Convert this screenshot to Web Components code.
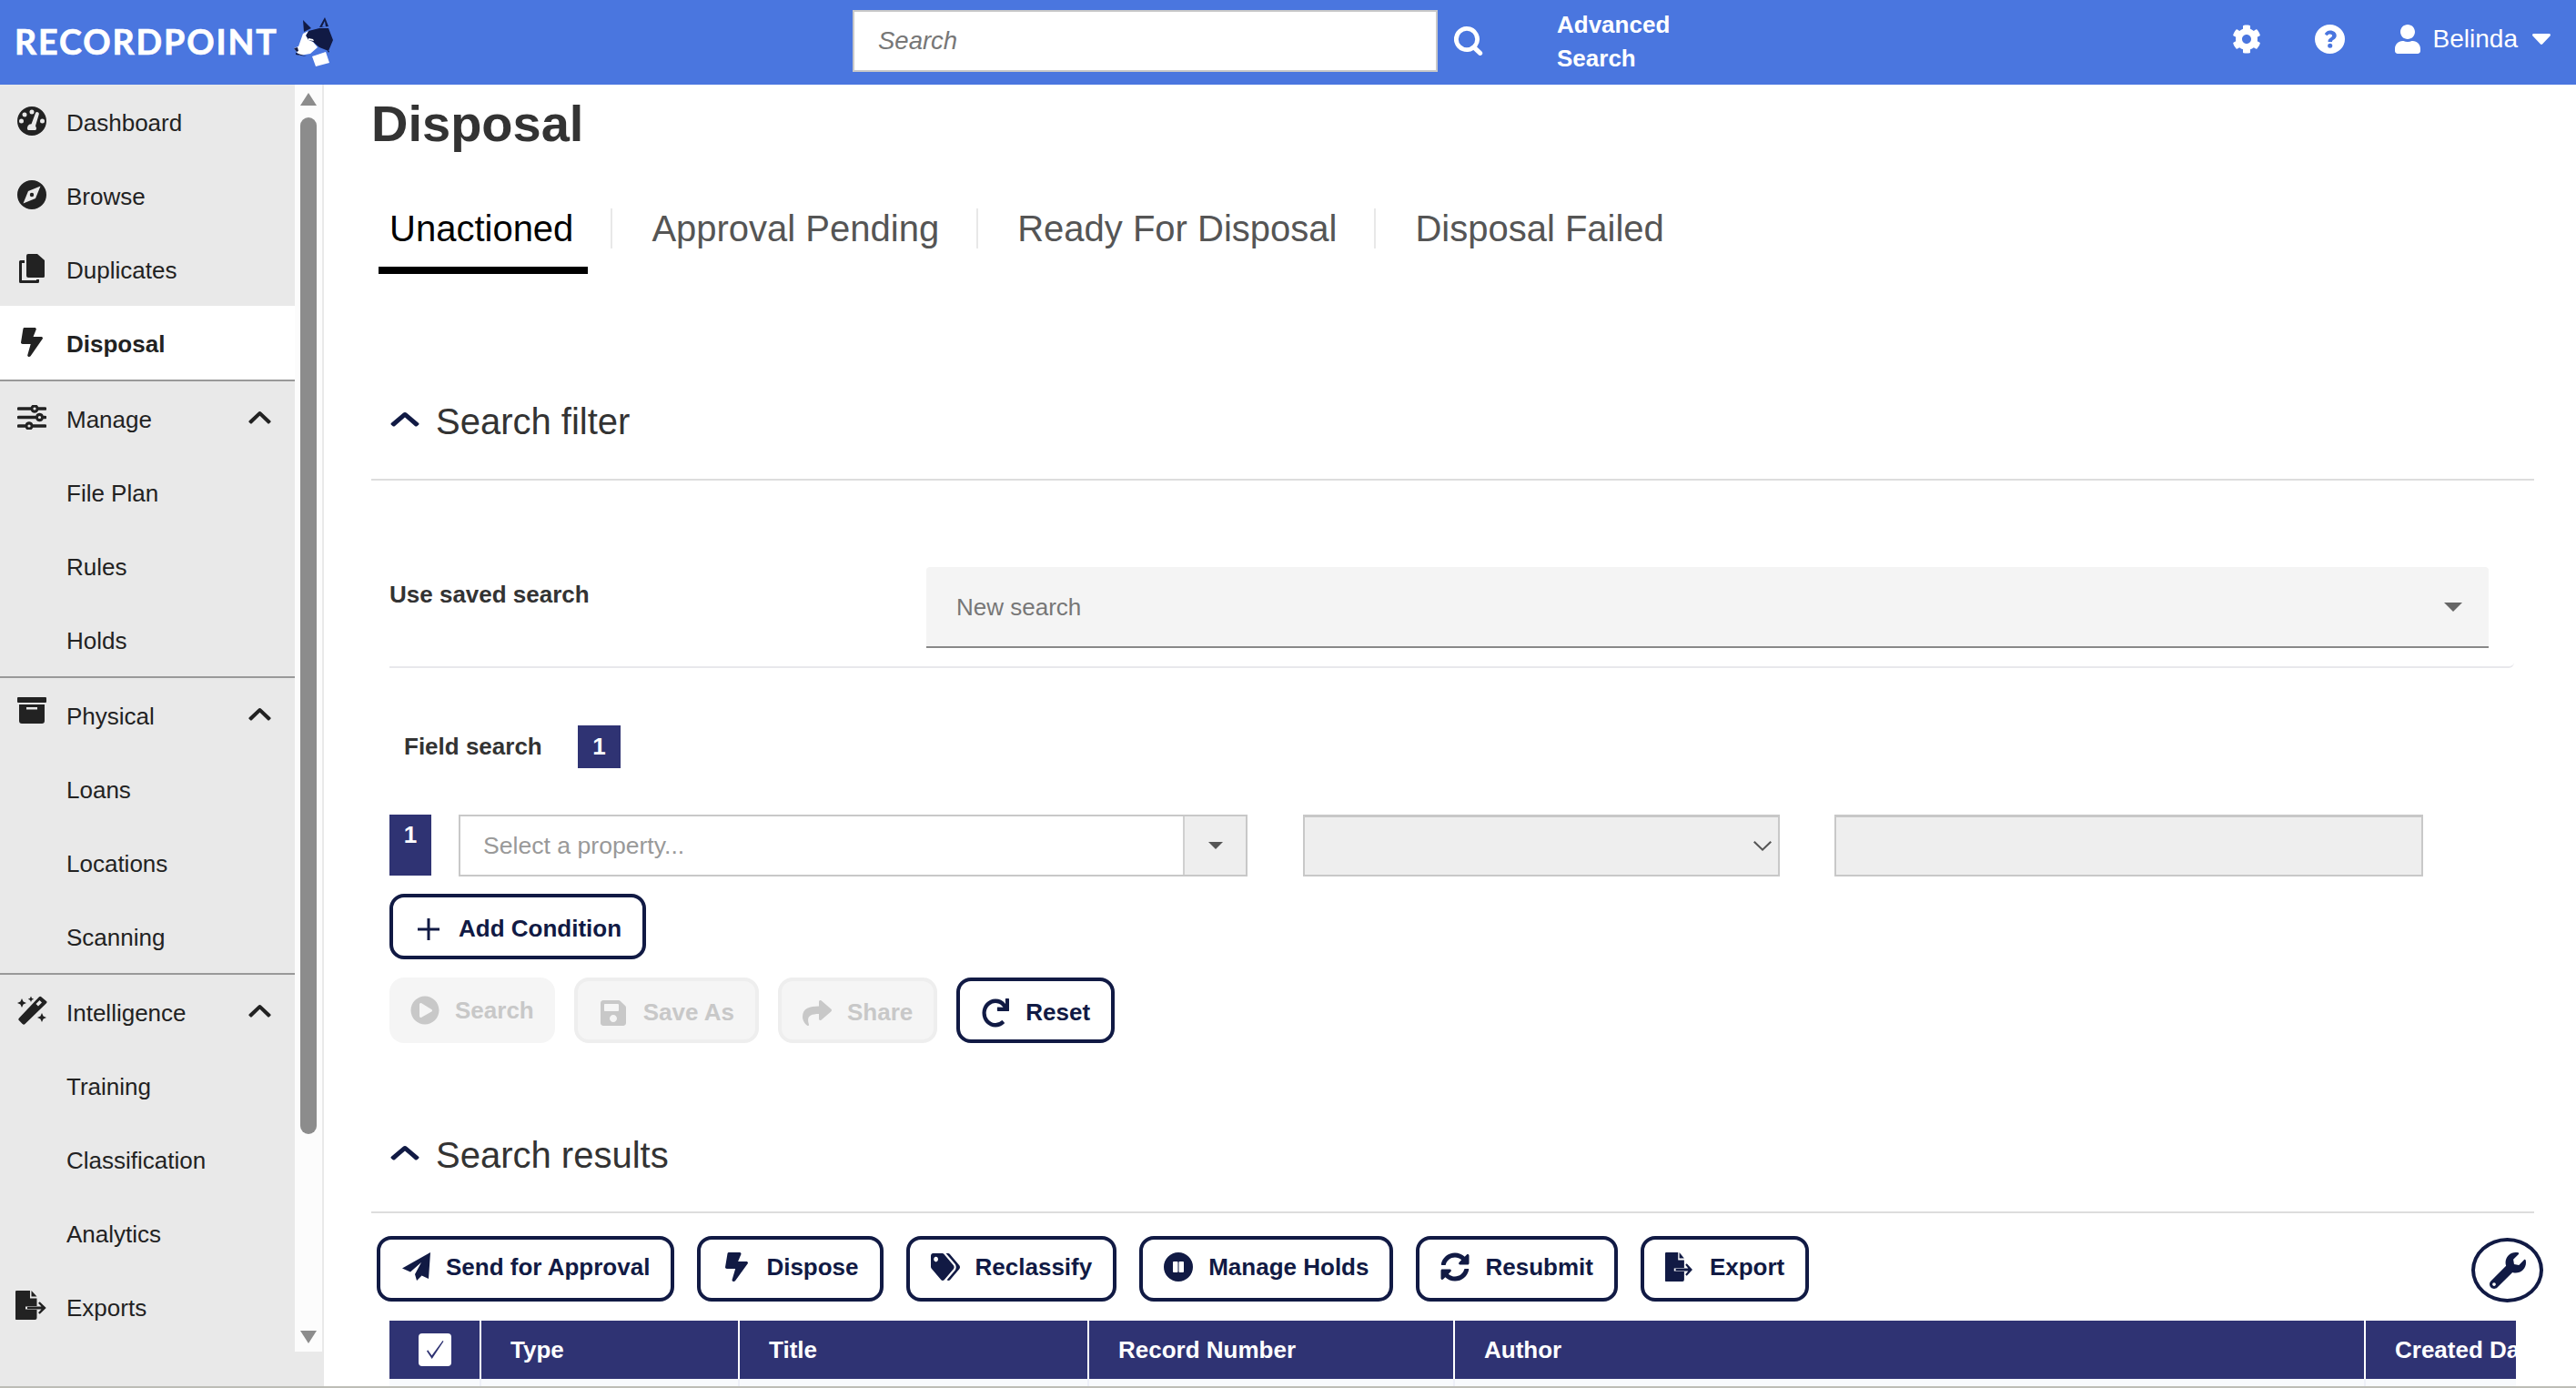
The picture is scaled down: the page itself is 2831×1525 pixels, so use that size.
<!DOCTYPE html>
<html lang="en"><head><meta charset="utf-8"><title>Disposal</title>
<style>
html,body{margin:0;padding:0;height:1525px;overflow:hidden;background:#fff;font-family:"Liberation Sans",Arial,sans-serif;color:#222}
</style></head><body>
<rp-app>
  <rp-header slot="header"></rp-header>
  <rp-sidebar slot="side">
    <rp-nav-item icon="gauge">Dashboard</rp-nav-item>
    <rp-nav-item icon="compass">Browse</rp-nav-item>
    <rp-nav-item icon="copy">Duplicates</rp-nav-item>
    <rp-nav-item icon="bolt" active divider>Disposal</rp-nav-item>
    <rp-nav-item icon="sliders" chevron>Manage</rp-nav-item>
    <rp-nav-item>File Plan</rp-nav-item>
    <rp-nav-item>Rules</rp-nav-item>
    <rp-nav-item divider>Holds</rp-nav-item>
    <rp-nav-item icon="archive" chevron>Physical</rp-nav-item>
    <rp-nav-item>Loans</rp-nav-item>
    <rp-nav-item>Locations</rp-nav-item>
    <rp-nav-item divider>Scanning</rp-nav-item>
    <rp-nav-item icon="wand" chevron>Intelligence</rp-nav-item>
    <rp-nav-item>Training</rp-nav-item>
    <rp-nav-item>Classification</rp-nav-item>
    <rp-nav-item>Analytics</rp-nav-item>
    <rp-nav-item icon="export">Exports</rp-nav-item>
  </rp-sidebar>
  <rp-disposal slot="main"></rp-disposal>
</rp-app>
<script>
const ICONS={
 bolt:['0 0 320 512','M296 160H180.6l42.6-129.8C227.2 15 215.7 0 200 0H56C44 0 33.8 8.9 32.2 20.8l-32 240C-1.7 275.2 9.5 288 24 288h118.7L96.6 482.5c-3.6 15.2 8 29.5 23.3 29.5 8.4 0 16.4-4.4 20.8-12l176-304c9.3-15.9-2.2-36-20.7-36z'],
 cog:['0 0 512 512','M487.4 315.7l-42.6-24.6c4.3-23.2 4.3-47 0-70.2l42.6-24.6c4.9-2.8 7.1-8.6 5.5-14-11.1-35.6-30-67.8-54.7-94.6-3.8-4.1-10-5.1-14.8-2.3L380.8 110c-17.9-15.4-38.5-27.3-60.8-35.1V25.8c0-5.6-3.9-10.5-9.4-11.7-36.7-8.2-74.3-7.8-109.2 0-5.5 1.2-9.4 6.1-9.4 11.7V75c-22.2 7.9-42.8 19.8-60.8 35.1L88.7 85.5c-4.9-2.8-11-1.9-14.8 2.3-24.7 26.7-43.6 58.9-54.7 94.6-1.7 5.4.6 11.2 5.5 14L67.3 221c-4.3 23.2-4.3 47 0 70.2l-42.6 24.6c-4.9 2.8-7.1 8.6-5.5 14 11.1 35.6 30 67.8 54.7 94.6 3.8 4.1 10 5.1 14.8 2.3l42.6-24.6c17.9 15.4 38.5 27.3 60.8 35.1v49.2c0 5.6 3.9 10.5 9.4 11.7 36.7 8.2 74.3 7.8 109.2 0 5.5-1.2 9.4-6.1 9.4-11.7v-49.2c22.2-7.9 42.8-19.8 60.8-35.1l42.6 24.6c4.9 2.8 11 1.9 14.8-2.3 24.7-26.7 43.6-58.9 54.7-94.6 1.5-5.5-.7-11.3-5.6-14.1zM256 336c-44.1 0-80-35.9-80-80s35.9-80 80-80 80 35.9 80 80-35.9 80-80 80z'],
 user:['0 0 448 512','M224 256c70.7 0 128-57.3 128-128S294.7 0 224 0 96 57.3 96 128s57.3 128 128 128zm89.6 32h-16.7c-22.2 10.2-46.9 16-72.9 16s-50.6-5.8-72.9-16h-16.7C60.2 288 0 348.2 0 422.4V464c0 26.5 21.5 48 48 48h352c26.5 0 48-21.5 48-48v-41.6c0-74.2-60.2-134.4-134.4-134.4z'],
 tags:['0 0 640 512','M497.941 225.941L286.059 14.059A48 48 0 0 0 252.118 0H48C21.49 0 0 21.49 0 48v204.118a48 48 0 0 0 14.059 33.941l211.882 211.882c18.744 18.745 49.136 18.746 67.882 0l204.118-204.118c18.745-18.745 18.745-49.137 0-67.882zM112 160c-26.51 0-48-21.49-48-48s21.49-48 48-48 48 21.49 48 48-21.49 48-48 48zm513.941 133.823L421.823 497.941c-18.745 18.745-49.137 18.745-67.882 0l-.36-.36L527.64 323.522c16.999-16.999 26.36-39.6 26.36-63.64s-9.362-46.641-26.36-63.64L331.397 0h48.721a48 48 0 0 1 33.941 14.059l211.882 211.882c18.745 18.745 18.745 49.137 0 67.882z'],
 sync:['0 0 512 512','M370.72 133.28C339.458 104.008 298.888 87.962 255.848 88c-77.458.068-144.328 53.178-162.791 126.85-1.344 5.363-6.122 9.15-11.651 9.15H24.103c-7.498 0-13.194-6.807-11.807-14.176C33.933 94.924 134.813 8 256 8c66.448 0 126.791 26.136 171.315 68.685L463.03 40.97C478.149 25.851 504 36.559 504 57.941V192c0 13.255-10.745 24-24 24H345.941c-21.382 0-32.09-25.851-16.971-40.971l41.75-41.749zM32 296h134.059c21.382 0 32.09 25.851 16.971 40.971l-41.75 41.75c31.262 29.273 71.835 45.319 114.876 45.28 77.418-.07 144.315-53.144 162.787-126.849 1.344-5.363 6.122-9.15 11.651-9.15h57.304c7.498 0 13.194 6.807 11.807 14.176C478.067 417.076 377.187 504 256 504c-66.448 0-126.791-26.136-171.315-68.685L48.97 471.03C33.851 486.149 8 475.441 8 454.059V320c0-13.255 10.745-24 24-24z'],
 wrench:['0 0 512 512','M507.73 109.1c-2.24-9.03-13.54-12.09-20.12-5.51l-74.36 74.36-67.88-11.31-11.31-67.88 74.36-74.36c6.62-6.62 3.43-17.9-5.66-20.16-47.38-11.74-99.55.91-136.58 37.93-39.64 39.64-50.55 97.1-34.05 147.2L18.74 402.76c-24.99 24.99-24.99 65.51 0 90.5 24.99 24.99 65.51 24.99 90.5 0l213.21-213.21c50.12 16.71 107.47 5.68 147.37-34.22 37.07-37.07 49.7-89.32 37.91-136.73zM64 472c-13.25 0-24-10.75-24-24 0-13.26 10.75-24 24-24s24 10.74 24 24c0 13.25-10.75 24-24 24z'],
 redo:['0 0 512 512','M500.33 0h-47.41a12 12 0 0 0-12 12.57l4 82.76A247.42 247.42 0 0 0 256 8C119.34 8 7.9 119.53 8 256.19 8.1 393.07 119.1 504 256 504a247.1 247.1 0 0 0 166.18-63.91 12 12 0 0 0 .48-17.43l-34-34a12 12 0 0 0-16.38-.55A176 176 0 1 1 402.1 157.8l-101.53-4.87a12 12 0 0 0-12.57 12v47.41a12 12 0 0 0 12 12h200.33a12 12 0 0 0 12-12V12a12 12 0 0 0-12-12z'],
 save:['0 0 448 512','M433.941 129.941l-83.882-83.882A48 48 0 0 0 316.118 32H48C21.49 32 0 53.49 0 80v352c0 26.51 21.49 48 48 48h352c26.51 0 48-21.49 48-48V163.882a48 48 0 0 0-14.059-33.941zM224 416c-35.346 0-64-28.654-64-64 0-35.346 28.654-64 64-64s64 28.654 64 64c0 35.346-28.654 64-64 64zm96-304.52V212c0 6.627-5.373 12-12 12H76c-6.627 0-12-5.373-12-12V108c0-6.627 5.373-12 12-12h228.52c3.183 0 6.235 1.264 8.485 3.515l3.48 3.48A11.996 11.996 0 0 1 320 111.48z'],
 share:['0 0 512 512','M503.691 189.836L327.687 37.851C312.281 24.546 288 35.347 288 56.015v80.053C127.371 137.907 0 170.1 0 322.326c0 61.441 39.581 122.309 83.333 154.132 13.653 9.931 33.111-2.533 28.077-18.631C66.066 312.814 132.917 274.316 288 272.085V360c0 20.7 24.3 31.453 39.687 18.164l176.004-152c11.071-9.562 11.086-26.753 0-36.328z'],
 play:['0 0 512 512','M256 8C119 8 8 119 8 256s111 248 248 248 248-111 248-248S393 8 256 8zm115.7 272l-176 101c-15.8 8.8-35.7-2.5-35.7-21V152c0-18.4 19.8-29.8 35.7-21l176 107c16.4 9.2 16.4 32.9 0 42z'],
 send:['11 11 32 32','M43 11 12 28.500l9 4 12-10.500-7 13 2 7 5.500-5.500 7.500 3.500z'],
 pause:['0 0 32 32','M16 0a16 16 0 1 0 0 32 16 16 0 0 0 0-32zM11 10h3.500a1 1 0 0 1 1 1v10a1 1 0 0 1-1 1H11a1 1 0 0 1-1-1V11a1 1 0 0 1 1-1zm6.500 0H21a1 1 0 0 1 1 1v10a1 1 0 0 1-1 1h-3.500a1 1 0 0 1-1-1V11a1 1 0 0 1 1-1z'],
 gauge:['0 0 32 32','M16 0a16 16 0 1 0 0 32 16 16 0 0 0 0-32zM16 3.500a2.500 2.500 0 1 1 0 5 2.500 2.500 0 0 1 0-5zM8 6.500a2.500 2.500 0 1 1 0 5 2.500 2.500 0 0 1 0-5zM4.500 13.500a2.500 2.500 0 1 1 0 5 2.500 2.500 0 0 1 0-5zM27.500 13.500a2.500 2.500 0 1 1 0 5 2.500 2.500 0 0 1 0-5zM23.800 8.500l-3.800 12.800a4.300 4.300 0 0 1 .3 4.700H11.700a4.300 4.300 0 0 1 3.800-6.700l4.500-12a2 2 0 0 1 3.800 1.200z'],
 compass:['0 0 32 32','M16 0a16 16 0 1 0 0 32 16 16 0 0 0 0-32zM25.500 6.500L20 20 6.500 25.500 12 12z M16 13.800a2.200 2.200 0 1 0 0 4.400 2.200 2.200 0 0 0 0-4.400z'],
 copy:['0 0 28 32','M10 0h10l8 7v17.500a1.500 1.500 0 0 1-1.500 1.500H10a2 2 0 0 1-2-2V2a2 2 0 0 1 2-2zM1.500 7H6v3H3v19h16v-1h3v2.500a1.500 1.500 0 0 1-1.500 1.500h-19A1.500 1.500 0 0 1 0 30.500v-22A1.500 1.500 0 0 1 1.500 7z'],
 sliders:['0 0 32 27','M1.500 2.200h13.300a4.500 4.500 0 0 1 8.400 0h7.300a1.800 1.800 0 0 1 0 3.600h-7.300a4.500 4.500 0 0 1-8.400 0H1.500a1.800 1.800 0 0 1 0-3.600zM19 2.400a1.600 1.600 0 1 0 0 3.200 1.600 1.600 0 0 0 0-3.200zM1.500 11.700h18.800a4.500 4.500 0 0 1 8.400 0h1.800a1.800 1.800 0 0 1 0 3.600h-1.800a4.500 4.500 0 0 1-8.400 0H1.500a1.800 1.800 0 0 1 0-3.600zM24.500 11.900a1.600 1.600 0 1 0 0 3.200 1.600 1.600 0 0 0 0-3.200zM1.500 21.200h7.300a4.500 4.500 0 0 1 8.400 0h13.300a1.800 1.800 0 0 1 0 3.600H17.200a4.500 4.500 0 0 1-8.400 0H1.500a1.800 1.800 0 0 1 0-3.600zM13 21.400a1.600 1.600 0 1 0 0 3.200 1.600 1.600 0 0 0 0-3.200z'],
 archive:['0 0 32 29','M1 0h30a1 1 0 0 1 1 1v4a1 1 0 0 1-1 1H1a1 1 0 0 1-1-1V1a1 1 0 0 1 1-1zM2 8h28v18a3 3 0 0 1-3 3H5a3 3 0 0 1-3-3zM10 11v2.500h12V11z'],
 wand:['0 0 34 32','M27 1l6 5a1.500 1.500 0 0 1 0 2.200L9.500 31a2 2 0 0 1-2.800 0L3 27.300a2 2 0 0 1 0-2.800L25 1.200A1.500 1.500 0 0 1 27 1zM25.500 5L21.500 9l2.500 2.500 4-4zM6 3l1.600 3.400L11 8l-3.400 1.600L6 13 4.400 9.600 1 8l3.400-1.600zM16 0.500l1 2.200 2.200 1-2.200 1-1 2.300-1-2.300-2.200-1 2.200-1zM28 19l1.600 3.400 3.400 1.600-3.400 1.600L28 29l-1.600-3.400-3.400-1.600 3.400-1.600z'],
 export:['0 0 36 32','M1.500 0H16v8.500h7.500V17H13v3h10.500v10a2 2 0 0 1-2 2h-20a2 2 0 0 1-2-2V2a2 2 0 0 1 2-2zM17.500 0l6 6.500h-6zM11 17.500h17.500l-3.500-3.700 1.700-1.600 7 6.800-7 6.800-1.700-1.600 3.500-3.700H11z'],
 help:['0 0 32 32','M16 0a16 16 0 1 0 0 32 16 16 0 0 0 0-32zM16.300 6.500c3.700 0 6.700 2.300 6.700 5.600 0 4.300-4.600 4.500-4.600 6.600v.3h-4.300v-.7c0-3.400 4.400-3.900 4.400-6 0-1-1-1.800-2.300-1.800-1.400 0-2.300.6-3.200 1.800l-2.600-2c1.400-2.300 3.200-3.800 5.900-3.800zM16.200 20.700a2.500 2.500 0 1 1 0 5 2.500 2.500 0 0 1 0-5z'],
 search:['0 0 34 32','M14 0a14 14 0 1 0 7.300 25.900l5.600 5.300a2.500 2.500 0 0 0 3.500-3.600l-5.300-5.200A14 14 0 0 0 14 0zm0 4.800a9.200 9.200 0 1 1 0 18.400 9.200 9.200 0 0 1 0-18.400z'],
 plus:['0 0 26 26','M11.500 1h3v10.500H25v3H14.500V25h-3V14.500H1v-3h10.500z'],
 chevron:['0 0 26 15','M13 0c.6 0 1.200.2 1.600.7l10.600 10.400a1.200 1.200 0 0 1 0 1.700l-1.400 1.400a1.200 1.200 0 0 1-1.700 0L13 5.100 3.900 14.200a1.200 1.200 0 0 1-1.700 0L.8 12.800a1.200 1.200 0 0 1 0-1.700L11.400.7C11.800.2 12.400 0 13 0z'],
 caret:['0 0 20 12','M1.500 0h17c1.300 0 2 1.600 1 2.500l-8.500 9c-.6.600-1.400.6-2 0l-8.500-9C-.500 1.600.200 0 1.500 0z'],
 tri:['0 0 20 12','M0 0h20L10 12z'],
 check:['0 0 24 24','M3 13.500l1.200-1.200 4.300 6L20.500 2l1 .7L8.700 22z'],
 down:['0 0 20 11','M0 1.500L1.500 0 10 8.200 18.500 0 20 1.500 10 11z']
};
function def(name,html,init){customElements.define(name,class extends HTMLElement{
  constructor(){super();this.attachShadow({mode:'open'}).innerHTML=html;}
  connectedCallback(){init&&init.call(this,this.shadowRoot);}
});}
def('rp-icon','<style>:host{display:inline-flex;flex:none;align-items:center;justify-content:center}svg{display:block;fill:currentColor}</style><svg xmlns="http://www.w3.org/2000/svg"><path/></svg>',function(r){
  const i=ICONS[this.getAttribute('name')];const s=r.querySelector('svg');
  s.setAttribute('viewBox',i[0]);s.setAttribute('width',this.getAttribute('w'));s.setAttribute('height',this.getAttribute('h'));
  s.setAttribute('preserveAspectRatio','none');
  const p=s.querySelector('path');p.setAttribute('d',i[1]);p.setAttribute('fill-rule','evenodd');
});
def('rp-app',`<style>:host{display:flex;flex-direction:column;height:1525px;overflow:hidden;box-sizing:border-box;border-bottom:2px solid #bdbdb6}
.body{display:flex;flex:1;min-height:0}</style>
<slot name="header"></slot><div class="body"><slot name="side"></slot><slot name="main"></slot></div>`);
def('rp-header',`<style>:host{display:flex;flex:none;align-items:center;height:93px;background:#4a76df;color:#fff;position:relative}
.logo{display:flex;align-items:center;margin-left:16px;width:351px;flex:none}
.wordmark{font:700 37.600px Lato,sans-serif;letter-spacing:1.900px;line-height:46px;width:306px;flex:none;margin-top:-1px;-webkit-text-stroke:.7px #fff}
.dog{display:block;flex:none;margin-top:-1px;margin-left:-6px}
.search{margin-left:570px;margin-top:-3px;box-sizing:border-box;width:643px;height:68px;background:#fff;border:2px solid #c8c8c8;display:flex;align-items:center;padding-left:26px;font:italic 27.500px "Liberation Sans",sans-serif;color:#777}
.go{margin-left:18px;margin-top:-3px}
.adv{margin-left:79px;font-weight:700;font-size:26px;line-height:37px;width:150px;margin-top:-2px}
.right{display:flex;align-items:center;margin-left:auto;padding-right:28px;margin-top:-7px}
.name{font-size:28px;margin-left:14px;margin-right:16px;line-height:34px}
.u{margin-left:55px}.h{margin-left:59px}
</style>
<div class="logo"><span class="wordmark">RECORDPOINT</span>
<svg class="dog" width="60" height="64" viewBox="0 0 60 64"><path fill="#111a44" d="M17 8l9 9-8 4zM41 5l4 10-10 1zM23 20l12-3 10 0 5 13-5 12-10-4-7-6-5-2-3-5z"/><path fill="#4a76df" d="M38 15l3-6 1 7z"/><path fill="#fff" d="M17 23l6-3-3 5 3 5 5 2 5 6-8 7-12 2-6-8 5-2z"/><path fill="#111a44" d="M7 39l4-1 1 4-2 1zM9 44l12 4-12-2z"/><path fill="#fff" d="M23 28l5 1 1 2-6-1zM27 48l15-5 4 12-15 4z"/><path fill="#111a44" d="M44 42h2l-1 2z"/></svg></div>
<div class="search">Search</div>
<rp-icon class="go" name="search" w="34" h="32"></rp-icon>
<div class="adv">Advanced<br>Search</div>
<div class="right"><rp-icon name="cog" w="32" h="32"></rp-icon><rp-icon class="h" name="help" w="33" h="32"></rp-icon><rp-icon class="u" name="user" w="28" h="32"></rp-icon><span class="name">Belinda</span><rp-icon name="caret" w="20" h="12"></rp-icon></div>`);
def('rp-sidebar',`<style>:host{display:block;flex:none;width:356px;background:#e9e9e9}
.wrap{display:flex;height:1392px;overflow:hidden}
.nav{width:324px;flex:none}
.bar{width:30px;flex:none;background:#fcfcfc;display:flex;flex-direction:column;align-items:center;padding-top:9px;box-sizing:border-box}
.thumb{width:18px;height:1117px;background:#8c8c8c;border-radius:9px;margin-top:13px}
.up,.dn{width:0;height:0;border-left:9.500px solid transparent;border-right:9.500px solid transparent}
.up{border-bottom:14px solid #8c8c8c}.dn{border-top:14px solid #8c8c8c;margin-top:216px}
</style><div class="wrap"><div class="nav"><slot></slot></div><div class="bar"><div class="up"></div><div class="thumb"></div><div class="dn"></div></div></div>`);
def('rp-nav-item',`<style>:host{display:flex;align-items:center;height:81px;box-sizing:content-box;font-size:26px;color:#222;position:relative}
:host([active]){background:#fff;font-weight:700}
:host([divider]){border-bottom:2px solid #999}
.ic{width:40px;margin-left:15px;margin-right:18px;display:flex;justify-content:center;flex:none;height:81px;align-items:center}
.lab{flex:1;padding-top:3px}
.ch{margin-right:26px;margin-top:-2px}
</style><div class="ic"></div><div class="lab"><slot></slot></div>`,function(r){
  const sz={gauge:[32,32,-2],compass:[32,32,-2],copy:[28,32,-2],bolt:[24,32,-2],sliders:[32,27,-2],archive:[32,29,-10],wand:[34,32,-4],export:[36,32,-3]};
  const n=this.getAttribute('icon');
  if(n){const s=sz[n];const i=document.createElement('rp-icon');i.setAttribute('name',n);i.setAttribute('w',s[0]);i.setAttribute('h',s[1]);i.style.marginTop=s[2]+'px';r.querySelector('.ic').append(i);}
  if(this.hasAttribute('chevron')){const c=document.createElement('rp-icon');c.className='ch';c.setAttribute('name','chevron');c.setAttribute('w',25);c.setAttribute('h',14);r.append(c);}
});
def('rp-tabs',`<style>:host{display:flex;align-items:flex-start;margin:36px 0 0 8px;font-size:40px;color:#555}</style><slot></slot>`);
def('rp-tab',`<style>:host{display:flex;box-sizing:border-box;height:87px;line-height:74px;position:relative;padding:0 16px 0 12px;margin-right:58px;white-space:nowrap}
:host([selected]){color:#000;border-bottom:8px solid #000}
:host(:not(:last-child))::after{content:"";position:absolute;right:-27px;top:15px;width:2px;height:44px;background:#e8e8e8}
</style><slot></slot>`);
def('rp-section-head',`<style>:host{display:flex;align-items:center;box-sizing:border-box;height:100px;padding:0 0 28px 21px;border-bottom:2px solid #ddd;font-size:40px;color:#333}
rp-icon{margin-right:18px;margin-top:-4px;color:#111a44}</style><rp-icon name="chevron" w="32" h="16"></rp-icon><slot></slot>`);
def('rp-btn',`<style>:host{display:inline-flex;align-items:center;box-sizing:border-box;height:72px;padding:5px 23px 0;border:4px solid #111a44;border-radius:16px;background:#fff;color:#111a44;font-size:26px;font-weight:700;white-space:nowrap;flex:none}
:host([off]){background:#f5f5f5;border-color:#eee;color:#c8c8c8}
:host([bare]){border:0;background:#f5f5f5;padding-top:0}
.ic{width:32px;margin-right:17px;display:flex;justify-content:center;flex:none}
</style><div class="ic"></div><span><slot></slot></span>`,function(r){
  const s={send:[32,32],bolt:[25,32],tags:[32,30],pause:[32,32],sync:[32,32],export:[32,32],plus:[26,26],play:[32,32],save:[28,32],share:[32,32],redo:[30,32]}[this.getAttribute('icon')];
  const i=document.createElement('rp-icon');i.setAttribute('name',this.getAttribute('icon'));i.setAttribute('w',s[0]);i.setAttribute('h',s[1]);r.querySelector('.ic').append(i);
});
def('rp-disposal',`<style>:host{display:block;flex:1;min-width:0;box-sizing:border-box;padding:0 46px 0 52px;overflow:hidden;height:1430px;color:#333}
h1{margin:0;font-size:56px;line-height:85px;font-weight:700;color:#333}
.sf{margin-top:127px}
.saved{margin:95px 22px 0 20px;display:flex;align-items:flex-start;padding-bottom:20px;border-bottom:2px solid #e8e8ec;border-bottom-right-radius:6px}
.lab{font-size:26px;font-weight:700;color:#333}
.saved .lab{width:590px;line-height:60px;flex:none}
.sel{flex:none;width:1717px;box-sizing:border-box;height:89px;background:#f4f4f4;border-bottom:2px solid #888;border-radius:4px 4px 0 0;display:flex;align-items:center;justify-content:space-between;padding:2px 29px 0 33px;font-size:26px;color:#777}
.sel rp-icon{color:#666;margin-top:-2px}
.fs{display:flex;align-items:center;margin:63px 0 0 36px}
.fs .lab{width:191px}
.num{background:#2f3373;color:#fff;font-weight:700;font-size:26px;display:flex;justify-content:center;box-sizing:border-box}
.fs .num{width:47px;height:47px;align-items:center}
.cond{display:flex;margin:51px 0 0 20px;align-items:flex-start}
.cond .num{width:46px;height:67px;padding-top:7px;line-height:30px;margin-right:30px}
.in{box-sizing:border-box;height:68px;border:2px solid #c8c8c8;font-size:26px}
.prop{width:867px;display:flex;margin-right:61px;color:#999}
.prop b{font-weight:400;flex:1;line-height:64px;padding-left:25px;font-size:26.600px}
.prop i{width:67px;background:#eee;border-left:2px solid #d0d0d0;display:flex;align-items:center;justify-content:center;color:#555}
.op{width:524px;background:#eee;margin-right:60px;border-top-width:3px;display:flex;align-items:center;justify-content:flex-end;padding-right:7px;color:#555}
.val{width:647px;background:#eee;border-top-width:3px}
.add{margin:19px 0 0 20px;display:flex}
.btns{margin:20px 0 0 20px;display:flex;gap:21px}
.sr{margin-top:89px;height:98px}
.acts{display:flex;gap:25px;margin:25px 0 0 6px;position:relative;align-items:flex-start}
.acts rp-btn{padding-top:0;padding-bottom:4px}
.wr{margin-left:auto;margin-right:-10px;margin-top:2px;width:79px;height:71px;box-sizing:border-box;border:4px solid #111a44;border-radius:50%;display:flex;align-items:center;justify-content:center;color:#111a44;flex:none}
.tbl{margin:20px 20px 0 20px;overflow:hidden}
.row{display:grid;grid-template-columns:99px 284px 384px 402px 1001px 300px;width:2470px}
.row.h{background:#2f3373;height:64px;color:#fff;font-size:26px;font-weight:700;line-height:64px}
.row.h div+div{border-left:2px solid #fff;padding-left:32px;white-space:nowrap;overflow:hidden}
.row.p{height:9px;background:#f8fafd}.row.p div+div{border-left:2px solid #eef0f8}
.cb{display:flex;align-items:center;justify-content:center;height:64px}
.cb span{width:36px;height:36px;background:#fff;border-radius:4px;display:flex;align-items:center;justify-content:center;color:#2f3373}
</style>
<h1>Disposal</h1>
<rp-tabs><rp-tab selected>Unactioned</rp-tab><rp-tab>Approval Pending</rp-tab><rp-tab>Ready For Disposal</rp-tab><rp-tab>Disposal Failed</rp-tab></rp-tabs>
<rp-section-head class="sf">Search filter</rp-section-head>
<div class="saved"><div class="lab">Use saved search</div><div class="sel"><span>New search</span><rp-icon name="tri" w="20" h="10"></rp-icon></div></div>
<div class="fs"><div class="lab">Field search</div><div class="num">1</div></div>
<div class="cond"><div class="num">1</div>
 <div class="in prop"><b>Select a property...</b><i><rp-icon name="tri" w="16" h="8"></rp-icon></i></div>
 <div class="in op"><rp-icon name="down" w="20" h="11"></rp-icon></div>
 <div class="in val"></div></div>
<div class="add"><rp-btn icon="plus">Add Condition</rp-btn></div>
<div class="btns"><rp-btn icon="play" off bare>Search</rp-btn><rp-btn icon="save" off>Save As</rp-btn><rp-btn icon="share" off>Share</rp-btn><rp-btn icon="redo">Reset</rp-btn></div>
<rp-section-head class="sr">Search results</rp-section-head>
<div class="acts"><rp-btn icon="send">Send for Approval</rp-btn><rp-btn icon="bolt">Dispose</rp-btn><rp-btn icon="tags">Reclassify</rp-btn><rp-btn icon="pause">Manage Holds</rp-btn><rp-btn icon="sync">Resubmit</rp-btn><rp-btn icon="export">Export</rp-btn><div class="wr"><rp-icon name="wrench" w="40" h="40"></rp-icon></div></div>
<div class="tbl"><div class="row h"><div class="cb"><span><rp-icon name="check" w="24" h="24"></rp-icon></span></div><div>Type</div><div>Title</div><div>Record Number</div><div>Author</div><div>Created Date</div></div>
<div class="row p"><div></div><div></div><div></div><div></div><div></div><div></div></div></div>`);
</script>
</body></html>
